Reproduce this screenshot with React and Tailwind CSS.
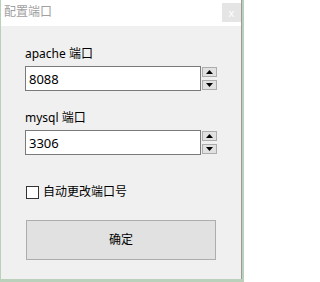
import React, { useState } from 'react';

const font = { fontFamily: '"Noto Sans", "Noto Sans CJK SC", sans-serif' };

const Spinner = () => (
  <div className="flex flex-col gap-[3px] pt-[1px]">
    <button className="w-[15px] h-[10px] bg-[#e1e1e1] border border-[#adadad] flex items-center justify-center">
      <svg width="7" height="4" viewBox="0 0 7 4"><path d="M3.5 0 L7 4 L0 4 Z" fill="#000" /></svg>
    </button>
    <button className="w-[15px] h-[10px] bg-[#e1e1e1] border border-[#adadad] flex items-center justify-center">
      <svg width="7" height="4" viewBox="0 0 7 4"><path d="M0 0 L7 0 L3.5 4 Z" fill="#000" /></svg>
    </button>
  </div>
);

const PortField = ({ label, value, onChange }) => (
  <div className="flex flex-col">
    <div className="h-[16px] leading-[16px] text-[12px] text-black pt-[2px] box-content">{label}</div>
    <div className="flex items-start gap-[1px] mt-[4px]">
      <input
        type="text"
        value={value}
        onChange={(e) => onChange(e.target.value)}
        className="w-[176px] h-[25px] border border-[#7a7a7a] bg-white px-[3px] text-[13px] text-black outline-none"
        style={font}
      />
      <Spinner />
    </div>
  </div>
);

export default function App() {
  const [apache, setApache] = useState('8088');
  const [mysql, setMysql] = useState('3306');
  const [auto, setAuto] = useState(false);

  return (
    <div className="w-[244px] h-[282px] bg-[#b9d0bb] overflow-hidden" style={font}>
      <div className="ml-[1px] w-[241px] h-[279px] flex flex-col border-r border-[#9a9a9a] bg-[#f0f0f0]">
        <div className="h-[26px] bg-white flex items-start justify-between">
          <span className="pl-[3px] pt-[4px] text-[12px] leading-[16px] text-[#a0a0a0]">配置端口</span>
          <div className="mt-[3px] w-[19px] h-[19px] bg-[#e5e5e5] flex items-center justify-center text-[11px] text-white leading-none">
            x
          </div>
        </div>
        <div className="flex flex-col pl-[24px] pt-[18px]">
          <PortField label="apache 端口" value={apache} onChange={setApache} />
          <div className="mt-[17px]">
            <PortField label="mysql 端口" value={mysql} onChange={setMysql} />
          </div>
          <label className="mt-[29px] flex items-center gap-[4px] cursor-pointer">
            <span
              className="w-[13px] h-[13px] border border-[#333] bg-white flex items-center justify-center ml-[1px]"
              onClick={() => setAuto(!auto)}
            >
              {auto && <svg width="9" height="9" viewBox="0 0 9 9"><path d="M1 4.5 L3.5 7 L8 1.5" stroke="#000" strokeWidth="1.5" fill="none" /></svg>}
            </span>
            <span className="text-[12px] leading-[16px] text-black">自动更改端口号</span>
          </label>
          <button className="mt-[20px] ml-[1px] w-[190px] h-[40px] bg-[#e1e1e1] border border-[#adadad] text-[12px] text-black">
            确定
          </button>
        </div>
      </div>
    </div>
  );
}
